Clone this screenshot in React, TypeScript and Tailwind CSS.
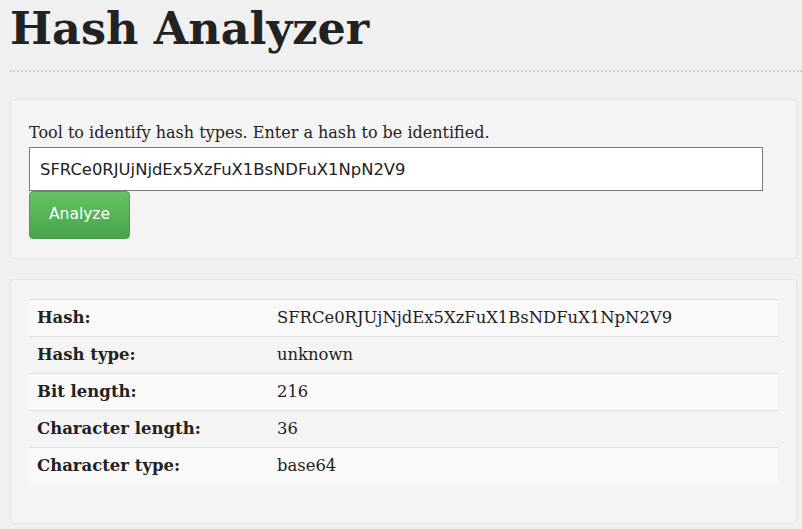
import React from "react";

const rows: [string, string][] = [
  ["Hash:", "SFRCe0RJUjNjdEx5XzFuX1BsNDFuX1NpN2V9"],
  ["Hash type:", "unknown"],
  ["Bit length:", "216"],
  ["Character length:", "36"],
  ["Character type:", "base64"],
];

export default function App() {
  return (
    <div className="min-h-[529px] w-[802px] overflow-hidden bg-[#f0f0f0] text-[#222] [font-family:'DejaVu_Serif',serif]">
      <div className="pl-[10px]">
        <h1 className="pt-[2px] text-[44.5px] font-bold leading-[52px] text-[#222]">Hash Analyzer</h1>
        <div className="mt-[16px] border-b-2 border-dotted border-[#cdcdcd]" />
      </div>
      <div className="mt-[27px] ml-[10px] mr-[5px] rounded border border-[#e3e3e3] bg-[#f4f4f4] px-[18px] pt-[18px] pb-[19px]">
        <p className="text-[16px] leading-[29px] text-[#222]">Tool to identify hash types. Enter a hash to be identified.</p>
        <input
          readOnly
          value="SFRCe0RJUjNjdEx5XzFuX1BsNDFuX1NpN2V9"
          className="block h-[44px] w-[734px] border border-[#7a7a7a] bg-white px-[10px] text-[16.4px] text-[#222] outline-none [font-family:'DejaVu_Sans',sans-serif]"
        />
        <button className="block h-[48px] w-[101px] rounded-[4px] border border-[#4a9c4a] bg-gradient-to-b from-[#62c462] to-[#4aa34a] text-[15.5px] text-white [font-family:'DejaVu_Sans',sans-serif]">
          Analyze
        </button>
      </div>
      <div className="mt-[20px] ml-[10px] mr-[5px] rounded border border-[#e3e3e3] bg-[#f4f4f4] px-[18px] pt-[19px] pb-[38px]">
        <table className="w-[749px] border-collapse">
          <tbody>
            {rows.map(([k, v], i) => (
              <tr key={k} className={i % 2 === 0 ? "bg-[#f9f9f9]" : "bg-[#f4f4f4]"}>
                <td className="h-[37px] w-[248px] border-t border-[#dddddd] pl-[8px] text-[16.5px] font-bold">{k}</td>
                <td className="h-[37px] border-t border-[#dddddd] text-[16.4px]">{v}</td>
              </tr>
            ))}
          </tbody>
        </table>
      </div>
    </div>
  );
}
